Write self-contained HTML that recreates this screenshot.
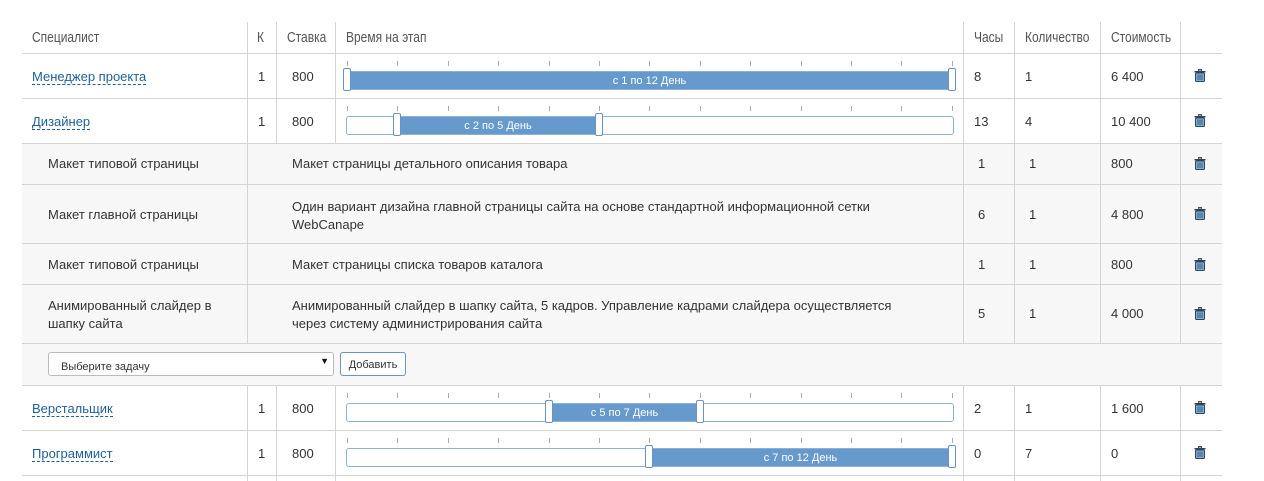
<!DOCTYPE html>
<html><head><meta charset="utf-8"><style>
body{margin:0;width:1264px;height:481px;background:#fff;font-family:"Liberation Sans",sans-serif;font-size:13px;color:#333;position:relative;overflow:hidden}
.a{position:absolute}
.hl{position:absolute;left:22px;width:1200px;height:1px;background:#d4d4d4}
.vl{position:absolute;width:1px;background:#d4d4d4}
.sub{position:absolute;left:22px;width:1200px;background:#f7f7f7}
.h{position:absolute;top:29px;color:#555;font-size:15px;transform:scaleX(.8);transform-origin:left}
.lnk{color:#1f5f99;border-bottom:1px dashed #1f5f99;line-height:15px}
.trk{position:absolute;left:346px;width:606px;height:17px;border:1px solid #8eb0d4;border-radius:3px;background:#fff}
.fill{position:absolute;top:0;height:17px;background:#6699cc;color:#fff;font-size:11px;text-align:center;line-height:19px}
.hd{position:absolute;width:6px;height:21px;border:1px solid #6b93c0;border-radius:2px;background:#fff}
.tk{position:absolute;width:1px;height:5px;background:#aaa}
.tr{position:absolute;left:1194px;width:12px;height:13px}
</style></head><body>
<div class="sub" style="top:143px;height:200px"></div>
<div class="sub" style="top:343px;height:42px"></div>
<div class="hl" style="top:53px"></div>
<div class="hl" style="top:98px"></div>
<div class="hl" style="top:143px"></div>
<div class="hl" style="top:184px"></div>
<div class="hl" style="top:243px"></div>
<div class="hl" style="top:284px"></div>
<div class="hl" style="top:343px"></div>
<div class="hl" style="top:385px"></div>
<div class="hl" style="top:430px"></div>
<div class="hl" style="top:475px"></div>
<div class="vl" style="left:247px;top:22px;height:321px"></div>
<div class="vl" style="left:276px;top:22px;height:121px"></div>
<div class="vl" style="left:335px;top:22px;height:121px"></div>
<div class="vl" style="left:963px;top:22px;height:321px"></div>
<div class="vl" style="left:1014px;top:22px;height:321px"></div>
<div class="vl" style="left:1100px;top:22px;height:321px"></div>
<div class="vl" style="left:1180px;top:22px;height:321px"></div>
<div class="vl" style="left:247px;top:385px;height:96px"></div>
<div class="vl" style="left:276px;top:385px;height:96px"></div>
<div class="vl" style="left:335px;top:385px;height:96px"></div>
<div class="vl" style="left:963px;top:385px;height:96px"></div>
<div class="vl" style="left:1014px;top:385px;height:96px"></div>
<div class="vl" style="left:1100px;top:385px;height:96px"></div>
<div class="vl" style="left:1180px;top:385px;height:96px"></div>
<div class="h" style="left:32px">Специалист</div>
<div class="h" style="left:257px">К</div>
<div class="h" style="left:287px">Ставка</div>
<div class="h" style="left:346px">Время на этап</div>
<div class="h" style="left:974px">Часы</div>
<div class="h" style="left:1025px">Количество</div>
<div class="h" style="left:1111px">Стоимость</div>

<div id="rows"></div>
<div class="a" style="left:48px;top:156px">Макет типовой страницы</div>
<div class="a" style="left:292px;top:156px">Макет страницы детального описания товара</div>
<div class="a" style="left:978px;top:156px">1</div><div class="a" style="left:1029px;top:156px">1</div><div class="a" style="left:1111px;top:156px">800</div>
<div class="a" style="left:48px;top:207px">Макет главной страницы</div>
<div class="a" style="left:292px;top:198px;line-height:18px">Один вариант дизайна главной страницы сайта на основе стандартной информационной сетки<br>WebCanape</div>
<div class="a" style="left:978px;top:207px">6</div><div class="a" style="left:1029px;top:207px">1</div><div class="a" style="left:1111px;top:207px">4 800</div>
<div class="a" style="left:48px;top:257px">Макет типовой страницы</div>
<div class="a" style="left:292px;top:257px">Макет страницы списка товаров каталога</div>
<div class="a" style="left:978px;top:257px">1</div><div class="a" style="left:1029px;top:257px">1</div><div class="a" style="left:1111px;top:257px">800</div>
<div class="a" style="left:48px;top:297px;line-height:18px">Анимированный слайдер в<br>шапку сайта</div>
<div class="a" style="left:292px;top:297px;line-height:18px">Анимированный слайдер в шапку сайта, 5 кадров. Управление кадрами слайдера осуществляется<br>через систему администрирования сайта</div>
<div class="a" style="left:978px;top:306px">5</div><div class="a" style="left:1029px;top:306px">1</div><div class="a" style="left:1111px;top:306px">4 000</div>
<div class="a" style="left:48px;top:352px;width:286px;height:24px;border:1px solid #bbb;border-radius:3px;background:#fff;font-size:11px;line-height:28px;box-sizing:border-box;padding-left:12px">Выберите задачу<span style="position:absolute;right:4px;top:-6px;font-size:9px;color:#111">▼</span></div>
<div class="a" style="left:340px;top:352px;width:66px;height:24px;border:1px solid #6b93c0;border-radius:3px;background:#fff;font-size:11px;line-height:24px;text-align:center;box-sizing:border-box;color:#333">Добавить</div>
<script>
var rows=[[53,"Менеджер проекта",8,1,"6 400",1,12],[98,"Дизайнер",13,4,"10 400",2,5],[385,"Верстальщик",2,1,"1 600",5,7],[430,"Программист",0,7,"0",7,12]];
var h="";
var tr='<svg viewBox="0 0 12 13" width="12" height="13"><rect x="4.5" y="0.5" width="3" height="1.5" fill="none" stroke="#456"/><rect x="0.5" y="2" width="11" height="1.5" fill="#345"/><rect x="1.5" y="4" width="9" height="8.5" rx="1" fill="#7ab0e0" stroke="#345"/><path d="M4 5.5v5.5M6 5.5v5.5M8 5.5v5.5" stroke="#345" stroke-width=".8"/></svg>';
[157,207,258,307].forEach(function(y){h+='<div class="tr" style="top:'+y+'px">'+tr+'</div>';});
rows.forEach(function(r){
var t=r[0],y=t+15;
h+='<div class="a" style="left:32px;top:'+(y+1)+'px"><span class="lnk">'+r[1]+'</span></div>';
h+='<div class="a" style="left:258px;top:'+(y+1)+'px">1</div><div class="a" style="left:292px;top:'+(y+1)+'px">800</div>';
h+='<div class="a" style="left:974px;top:'+(y+1)+'px">'+r[2]+'</div><div class="a" style="left:1025px;top:'+(y+1)+'px">'+r[3]+'</div><div class="a" style="left:1111px;top:'+(y+1)+'px">'+r[4]+'</div>';
h+='<div class="tr" style="top:'+(t+16)+'px">'+tr+'</div>';
for(var i=0;i<=12;i++)h+='<div class="tk" style="left:'+Math.round(347+i*50.4)+'px;top:'+(t+8)+'px"></div>';
var s=Math.round((r[5]-1)*50.4),e=Math.round(r[6]*50.4);
h+='<div class="trk" style="top:'+(t+18)+'px"><div class="fill" style="left:'+s+'px;width:'+(e-s)+'px">с '+r[5]+' по '+r[6]+' День</div></div>';
h+='<div class="hd" style="left:'+(343+s)+'px;top:'+(t+15)+'px"></div><div class="hd" style="left:'+(343+e)+'px;top:'+(t+15)+'px"></div>';
});
document.getElementById('rows').innerHTML=h;
</script>
</body></html>
